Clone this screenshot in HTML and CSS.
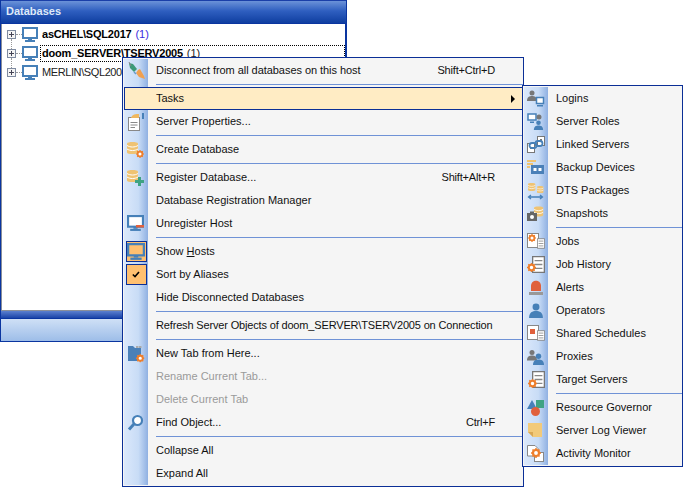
FILE: index.html
```html
<!DOCTYPE html>
<html lang="en">
<head>
<meta charset="utf-8">
<title>Databases</title>
<link rel="stylesheet" href="styles.css">
</head>
<body>
<svg class="defs" width="0" height="0">
  <symbol id="mon" viewBox="0 0 16 16"><rect x="1" y="1" width="14" height="10" fill="#fff" stroke="#4680b8" stroke-width="2"/><rect x="6" y="11" width="4" height="2" fill="#4680b8"/><rect x="3" y="13" width="10" height="2" fill="#4680b8"/></symbol>
  <symbol id="db" viewBox="0 0 12 14"><path d="M0 2.500C0 .5 11 .5 11 2.500V11.500C11 13.500 0 13.500 0 11.500Z" fill="#efc373"/><path d="M0 4.500C3 6.500 8 6.500 11 4.500M0 8C3 10 8 10 11 8" stroke="#fff" fill="none"/></symbol>
  <symbol id="gear" viewBox="0 0 10 10"><circle cx="5" cy="5" r="3" fill="#fff" stroke="#ee7f2d" stroke-width="2.200"/><path d="M5 0V2M5 8V10M0 5H2M8 5H10M1.500 1.500L3 3M7 7L8.500 8.500M8.500 1.500L7 3M3 7L1.500 8.500" stroke="#ee7f2d" stroke-width="1.500"/></symbol>
  <symbol id="person" viewBox="0 0 12 13"><circle cx="6" cy="3.500" r="3"/><path d="M0 13C0 8 3 7 6 7S12 8 12 13Z"/></symbol>
  <symbol id="doc" viewBox="0 0 10 13"><path d="M.5.500H9.500V12.500H.5Z" fill="#fff" stroke="#777"/><path d="M2 3.500H8M2 6.500H8M2 9.500H8" stroke="#888"/></symbol>
</svg>

<section class="panel">
  <header class="panel-title">Databases</header>
  <div class="tree">
    <div class="tree-row has-next">
      <span class="plus"></span><span class="dots"></span><svg class="ico16"><use href="#mon"/></svg>
      <span class="node bold">asCHEL\SQL2017 <span class="count">(1)</span></span>
    </div>
    <div class="tree-row has-next">
      <span class="plus"></span><span class="dots"></span><svg class="ico16"><use href="#mon"/></svg>
      <span class="node bold focus">doom_SERVER\TSERV2005 <span class="count dark">(1)</span></span>
    </div>
    <div class="tree-row">
      <span class="plus"></span><span class="dots"></span><svg class="ico16"><use href="#mon"/></svg>
      <span class="node narrow">MERLIN\SQL2008</span>
    </div>
  </div>
  <div class="panel-strip"></div>
  <div class="panel-foot"></div>
</section>

<nav class="menu main-menu">
  <div class="item"><span class="gut"><svg class="ico" viewBox="0 0 18 18"><path d="M2 1L6 2L10 7L7 10L3 6Z" fill="#3d9a78"/><path d="M2 0L4 4" stroke="#888"/><path d="M11 8L13 7L17 14L18 17L12 15L9 11Z" fill="#f0a050"/><path d="M7 10L9 12" stroke="#69c" stroke-width="1.500"/></svg></span><span class="lbl fit">Disconnect from all databases on this host</span><span class="key">Shift+Ctrl+D</span></div>
  <div class="sep"></div>
  <div class="item active"><span class="gut"></span><span class="lbl">Tasks</span><span class="arrow"></span></div>
  <div class="item"><span class="gut"><svg class="ico" viewBox="0 0 18 18"><rect x="1.500" y="4.500" width="11" height="13" fill="#fff" stroke="#888"/><path d="M3.500 9.500H10.500M3.500 12H10.500M3.500 14.500H8" stroke="#888"/><path d="M4 5C5 1 9 1 12 1V5Z" fill="#efb85f"/><rect x="15" y="0" width="2" height="6" fill="#4680b8"/></svg></span><span class="lbl">Server Properties...</span></div>
  <div class="sep"></div>
  <div class="item"><span class="gut"><svg class="ico" viewBox="0 0 18 18"><use href="#db" width="12" height="14" y="0"/><use href="#gear" x="9" y="9" width="8" height="8"/></svg></span><span class="lbl">Create Database</span></div>
  <div class="sep"></div>
  <div class="item"><span class="gut"><svg class="ico" viewBox="0 0 18 18"><use href="#db" width="12" height="14" y="0"/><path d="M11 8H14V11H17V14H14V17H11V14H8V11H11Z" fill="#3fa383"/></svg></span><span class="lbl">Register Database...</span><span class="key">Shift+Alt+R</span></div>
  <div class="item"><span class="gut"></span><span class="lbl">Database Registration Manager</span></div>
  <div class="item"><span class="gut"><svg class="ico" viewBox="0 0 18 18"><use href="#mon" width="17" height="17"/><rect x="9" y="10" width="8" height="2.500" fill="#e0603c"/></svg></span><span class="lbl">Unregister Host</span></div>
  <div class="sep"></div>
  <div class="item"><span class="gut"><span class="toggle"><svg class="ico" viewBox="0 0 16 16"><rect x="1" y="1" width="14" height="10" fill="#ffc070" stroke="#4680b8" stroke-width="2"/><rect x="6" y="11" width="4" height="2" fill="#4680b8"/><rect x="3" y="13" width="10" height="2" fill="#4680b8"/></svg></span></span><span class="lbl">Show <u>H</u>osts</span></div>
  <div class="item"><span class="gut"><span class="toggle"><svg class="check" viewBox="0 0 8 7"><path d="M.8 3.500L3 5.500L7 1" fill="none" stroke="#000" stroke-width="1.600"/></svg></span></span><span class="lbl">Sort by Aliases</span></div>
  <div class="item"><span class="gut"></span><span class="lbl">Hide Disconnected Databases</span></div>
  <div class="sep"></div>
  <div class="item"><span class="gut"></span><span class="lbl tight">Refresh Server Objects of doom_SERVER\TSERV2005 on Connection</span></div>
  <div class="sep"></div>
  <div class="item"><span class="gut"><svg class="ico" viewBox="0 0 18 18"><path d="M1 1H6L8 3H14V16H1Z" fill="#4a80b8"/><rect x="9" y="1" width="2.500" height="2" fill="#aaa"/><rect x="12" y="1" width="2.500" height="2" fill="#aaa"/><use href="#gear" x="9" y="9" width="8.500" height="8.500"/></svg></span><span class="lbl">New Tab from Here...</span></div>
  <div class="item off"><span class="gut"></span><span class="lbl">Rename Current Tab...</span></div>
  <div class="item off"><span class="gut"></span><span class="lbl">Delete Current Tab</span></div>
  <div class="item"><span class="gut"><svg class="ico" viewBox="0 0 18 18"><circle cx="10.500" cy="6.500" r="4.500" fill="#fff" stroke="#4680b8" stroke-width="2.200"/><path d="M7 10L2 15.500" stroke="#4680b8" stroke-width="3"/></svg></span><span class="lbl">Find Object...</span><span class="key">Ctrl+F</span></div>
  <div class="sep"></div>
  <div class="item"><span class="gut"></span><span class="lbl">Collapse All</span></div>
  <div class="item"><span class="gut"></span><span class="lbl">Expand All</span></div>
</nav>

<nav class="menu sub-menu">
  <div class="item"><span class="gut"><svg class="ico" viewBox="0 0 18 18"><use href="#person" width="10" height="11" fill="#777"/><rect x="9.500" y="7.500" width="7" height="6" fill="#fff" stroke="#4680b8" stroke-width="1.500"/><rect x="10" y="15" width="6" height="1.500" fill="#4680b8"/></svg></span><span class="lbl">Logins</span></div>
  <div class="item"><span class="gut"><svg class="ico" viewBox="0 0 18 18"><rect x="1" y="1" width="8" height="6" fill="#fff" stroke="#4680b8" stroke-width="1.500"/><rect x="3" y="8.500" width="4" height="1.500" fill="#4680b8"/><circle cx="12" cy="4" r="2.500" fill="#777"/><use href="#person" x="6" y="7" width="11" height="10" fill="#4680b8"/></svg></span><span class="lbl">Server Roles</span></div>
  <div class="item"><span class="gut"><svg class="ico" viewBox="0 0 18 18"><rect x=".5" y="7.500" width="7" height="9" fill="#fff" stroke="#777"/><rect x="3" y="11" width="2" height="2" fill="#777"/><rect x="10.500" y=".5" width="7" height="9" fill="#fff" stroke="#777"/><rect x="13" y="3" width="2" height="2" fill="#777"/><rect x="2.500" y="7" width="7" height="5" rx="2.500" fill="none" stroke="#4680b8" stroke-width="1.800"/><rect x="8.500" y="5" width="7" height="5" rx="2.500" fill="none" stroke="#4680b8" stroke-width="1.800"/></svg></span><span class="lbl">Linked Servers</span></div>
  <div class="item"><span class="gut"><svg class="ico" viewBox="0 0 18 18"><path d="M0 1H9V3H0ZM0 4H6V6H0ZM0 7H3V9H0Z" fill="#efc373"/><rect x="4" y="6" width="13" height="9" fill="#4a80b8"/><rect x="6.500" y="9" width="3" height="3" fill="#fff"/><rect x="11.500" y="9" width="3" height="3" fill="#fff"/></svg></span><span class="lbl">Backup Devices</span></div>
  <div class="item"><span class="gut"><svg class="ico" viewBox="0 0 18 18"><use href="#db" width="8" height="10" x="1"/><use href="#db" width="7" height="9" x="10" y="3"/><path d="M2 15H15M4 13L1.500 15L4 17M13 13L15.500 15L13 17" fill="none" stroke="#4680b8" stroke-width="1.300"/></svg></span><span class="lbl">DTS Packages</span></div>
  <div class="item"><span class="gut"><svg class="ico" viewBox="0 0 18 18"><use href="#db" width="10" height="13" x="7"/><rect x="0" y="8" width="10" height="8" fill="#666"/><rect x="3" y="6.500" width="4" height="2" fill="#666"/><circle cx="5" cy="12" r="2" fill="#fff"/></svg></span><span class="lbl">Snapshots</span></div>
  <div class="sep"></div>
  <div class="item"><span class="gut"><svg class="ico" viewBox="0 0 18 18"><rect x=".5" y=".5" width="11" height="14" fill="#fff" stroke="#888"/><use href="#doc" x="10" y="4" width="8" height="13"/><use href="#gear" x="1" y="1" width="8" height="8"/></svg></span><span class="lbl">Jobs</span></div>
  <div class="item"><span class="gut"><svg class="ico" viewBox="0 0 18 18"><use href="#doc" x="5" y="0" width="13" height="17"/><use href="#gear" x="0" y="7" width="9" height="9"/></svg></span><span class="lbl">Job History</span></div>
  <div class="item"><span class="gut"><svg class="ico" viewBox="0 0 18 18"><path d="M4 12V7C4 0 14 0 14 7V12Z" fill="#e0603c"/><path d="M2 13H16V16H2Z" fill="#999"/></svg></span><span class="lbl">Alerts</span></div>
  <div class="item"><span class="gut"><svg class="ico" viewBox="0 0 18 18"><use href="#person" x="2" y="1" width="14" height="15" fill="#4680b8"/></svg></span><span class="lbl">Operators</span></div>
  <div class="item"><span class="gut"><svg class="ico" viewBox="0 0 18 18"><rect x=".5" y=".5" width="11" height="14" fill="#fff" stroke="#888"/><rect x="3" y="4" width="5" height="5" fill="#e0603c"/><use href="#doc" x="10" y="4" width="8" height="13"/></svg></span><span class="lbl">Shared Schedules</span></div>
  <div class="item"><span class="gut"><svg class="ico" viewBox="0 0 18 18"><use href="#person" x="0" y="1" width="10" height="12" fill="#777"/><use href="#person" x="6" y="5" width="11" height="12" fill="#4680b8"/></svg></span><span class="lbl">Proxies</span></div>
  <div class="item"><span class="gut"><svg class="ico" viewBox="0 0 18 18"><use href="#doc" x="5" y="0" width="13" height="17"/><use href="#gear" x="1" y="8" width="9" height="9"/></svg></span><span class="lbl">Target Servers</span></div>
  <div class="sep"></div>
  <div class="item"><span class="gut"><svg class="ico" viewBox="0 0 18 18"><path d="M5 1L10 10H0Z" fill="#4680b8"/><rect x="9" y="1" width="8" height="8" fill="#3fa383"/><circle cx="8.500" cy="12.500" r="4.500" fill="#e0603c"/></svg></span><span class="lbl">Resource Governor</span></div>
  <div class="item"><span class="gut"><svg class="ico" viewBox="0 0 18 18"><path d="M1 1H15V15H6L1 10Z" fill="#f2ca7a"/><path d="M1 10H6V15Z" fill="#d9a855"/></svg></span><span class="lbl">Server Log Viewer</span></div>
  <div class="item"><span class="gut"><svg class="ico" viewBox="0 0 18 18"><path d="M.5.500H8L11 3.500V11H.5Z" fill="#fff" stroke="#888"/><rect x="7.500" y="7.500" width="9" height="9" fill="#fff" stroke="#888"/><use href="#gear" x="4" y="3" width="10" height="10"/></svg></span><span class="lbl">Activity Monitor</span></div>
</nav>
</body>
</html>
```
FILE: styles.css
```css
* { box-sizing: border-box; }
html, body { margin: 0; height: 487px; overflow: hidden; background: #fff; }
body { font-family: "Liberation Sans", Arial, sans-serif; font-size: 11px; color: #111; }
.defs { display: block; height: 0; }

.panel { width: 347px; height: 342px; display: flex; flex-direction: column; border: 1px solid #0a35a0; border-top: 0; }
.panel-title { height: 24px; flex: none; padding: 4px 4px 0 5px; font-weight: bold; font-size: 11px; color: #dfe9f8; border-top: 1px solid #1a3fa8; border-bottom: 1px solid #0a35a0;
  background: linear-gradient(#6b92d8, #2f5fc0 45%, #0f3ea0); }
.tree { flex: 1; background: #fff; border-left: 1px solid #8a8f9a; border-bottom: 1px solid #8a8f9a; border-right: 1px solid #0a35a0; padding-top: 1px; }
.tree-row { height: 19px; display: flex; align-items: center; padding-left: 5px; }
.plus { width: 9px; height: 9px; flex: none; position: relative; border: 1px solid #7f8ba0; background: linear-gradient(#445 0 0) center / 5px 1px no-repeat, linear-gradient(#445 0 0) center / 1px 5px no-repeat, #f4f4f4; }
.has-next .plus::after { content: ""; position: absolute; left: 3px; top: 8px; height: 10px; border-left: 1px dotted #999; }
.dots { width: 6px; flex: none; border-top: 1px dotted #999; }
.ico16 { width: 16px; height: 16px; flex: none; }
.node { margin-left: 2px; padding: 0 2px; line-height: 17px; flex: none; color: #222; }
.bold { font-weight: bold; font-size: 11px; letter-spacing: -.2px; color: #000; }
.narrow { letter-spacing: -.4px; }
.count { color: #3a2be0; font-weight: normal; letter-spacing: 0; margin-left: 1px; }
.dark { color: #222; }
.focus { width: 305px; outline: 1px dotted #000; outline-offset: -1px; }

.panel-strip { height: 8px; flex: none; background: linear-gradient(#5c80cf, #1a44a8); border-bottom: 1px solid #0a35a0; }
.panel-foot { height: 22px; flex: none; background: linear-gradient(#cfe0f6, #9dbde8); }

.menu { position: absolute; background: #f5f5f5; border: 1px solid #0b2f96; padding: 1px 0 1px 1px; }
.main-menu { left: 122px; top: 57px; width: 402px; height: 430px; }
.sub-menu { left: 522px; top: 85px; width: 161px; height: 382px; }

.item { height: 23px; display: flex; align-items: center; position: relative; }
.gut { width: 24px; height: 100%; flex: none; display: flex; align-items: center; justify-content: center; background: linear-gradient(90deg, #dbe8fb, #c8dcf6 60%, #8fb0e2); }
.lbl { margin-left: 8px; padding-bottom: 2px; flex: 1; white-space: nowrap; }
.fit { letter-spacing: -.05px; }
.tight { letter-spacing: -.16px; }
.key { margin-right: 28px; padding-bottom: 2px; letter-spacing: -.2px; }
.off .lbl { color: #9a9a9a; }
.ico { width: 18px; height: 18px; flex: none; }
.active { background: #ffecc4; outline: 1px solid #0b2f96; outline-offset: -1px; }
.active .gut { background: transparent; }
.arrow { width: 0; height: 0; margin-right: 8px; border-left: 4px solid #000; border-top: 4px solid transparent; border-bottom: 4px solid transparent; }
.toggle { width: 21px; height: 21px; display: flex; align-items: center; justify-content: center; background: #ffc070; border: 1px solid #0b2f96; }
.check { width: 8px; height: 7px; }
.sep { height: 5px; background: linear-gradient(90deg, #dbe8fb, #c8dcf6 60%, #8fb0e2) 0 0 / 24px 100% no-repeat, linear-gradient(#6f92d6 0 0) 32px 2px / 100% 1px no-repeat; }
```
